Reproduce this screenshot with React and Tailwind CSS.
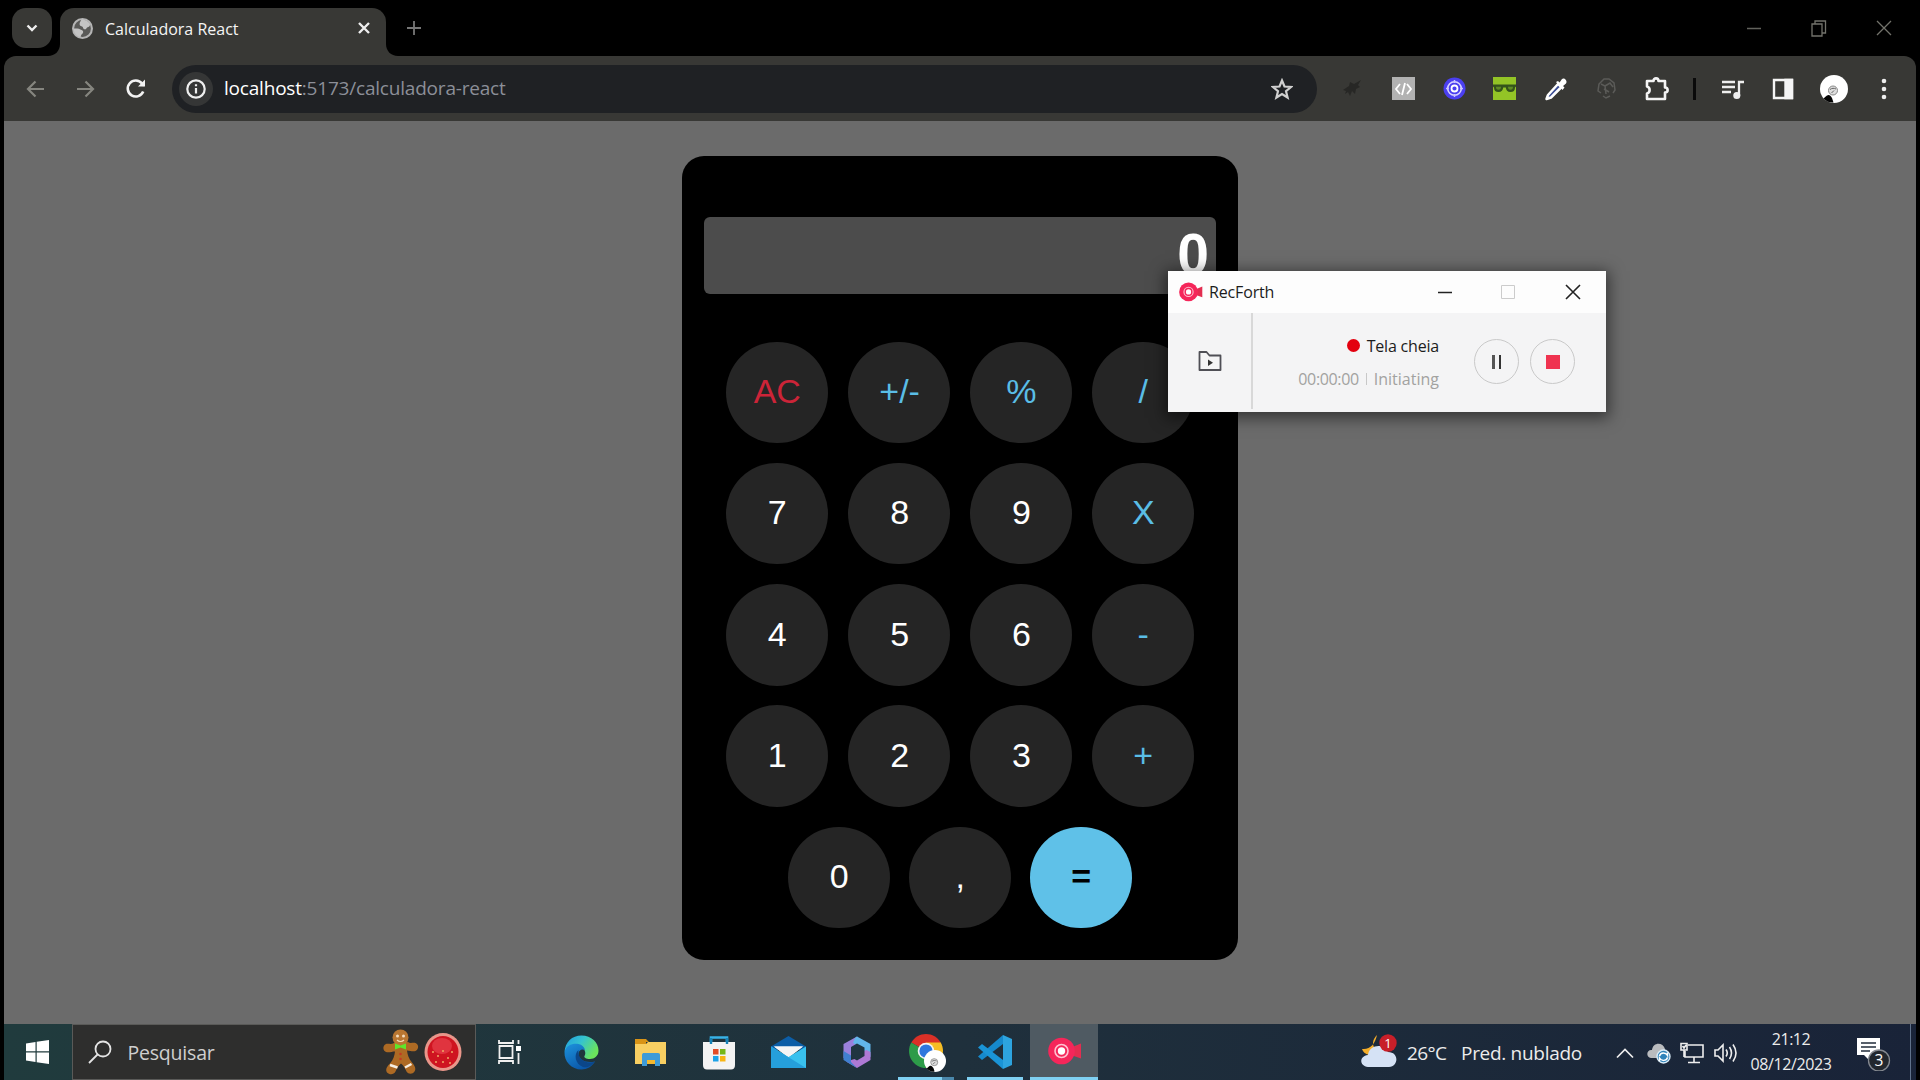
import React from "react";

const RED = "text-[#cc2438]";
const BLUE = "text-[#5abde6]";
const WHITE = "text-white";

const KEYS = [
  ["AC", RED], ["+/-", BLUE], ["%", BLUE], ["/", BLUE],
  ["7", WHITE], ["8", WHITE], ["9", WHITE], ["X", BLUE],
  ["4", WHITE], ["5", WHITE], ["6", WHITE], ["-", BLUE],
  ["1", WHITE], ["2", WHITE], ["3", WHITE], ["+", BLUE],
];

function Key({ children, tone, fill = "bg-[#252525]" }) {
  return (
    <button className={`flex h-[101.5px] w-[101.5px] items-center justify-center rounded-full pb-[2.5px] pl-px font-['Liberation_Sans',sans-serif] text-[34px] leading-none ${fill} ${tone}`}>
      {children}
    </button>
  );
}

function Calculator() {
  return (
    <main className="mt-[35px] ml-[678px] h-[804px] w-[556px] rounded-[22px] bg-black px-[22px] pt-[61px]">
      <div className="flex h-[77px] items-center justify-end rounded-md bg-[#4c4c4c] pr-[7px] font-['Liberation_Sans',sans-serif] text-[57px] leading-none font-bold text-white">
        <span className="pb-[2px]">0</span>
      </div>
      <div className="mt-[47.5px] ml-[22px] grid w-[467.5px] grid-cols-4 justify-between gap-y-[19.8px]">
        {KEYS.map(([label, tone], i) => (
          <div key={label} className={["justify-self-start", "justify-self-start ml-[5.5px]", "justify-self-end mr-[5px]", "justify-self-end"][i % 4]}>
            <Key tone={tone}>{label}</Key>
          </div>
        ))}
      </div>
      <div className="mt-[19.8px] ml-[84px] flex gap-[19.5px]">
        <Key tone={WHITE}>0</Key>
        <Key tone={WHITE}>,</Key>
        <Key tone="text-black font-bold" fill="bg-[#5fc1e8]">=</Key>
      </div>
    </main>
  );
}

function Globe() {
  return (
    <svg width="21" height="21" viewBox="0 0 20 20">
      <circle cx="10" cy="10" r="9" fill="#5a5a58" stroke="#b4b4b4" strokeWidth="2" />
      <path d="M9 1.5c4 0 7 2 8.3 5-.6 2.5-3 2-3.6 3.5-.8 1.5-3.2.8-3.3-.9.1-1.5-2.8-.8-3.1-2.6C7 4.5 8 3.5 9 1.5zM1.500 10c2 .1 5-.2 6.500 1 1.500 1 3 .8 2.600 2.700-.5 1.600-2.100 1.500-2.400 4.600C4 17.500 1.500 14 1.500 10z" fill="#c4c4c4" />
    </svg>
  );
}

function TabStrip() {
  return (
    <div className="flex h-14 items-start bg-black">
      <div className="mt-2 ml-3 flex h-10 w-10 items-center justify-center rounded-[14px] bg-[#383835]">
        <svg width="16" height="16" viewBox="0 0 16 16" fill="none" stroke="#eee" strokeWidth="2.4"><path d="M3.500 5.500 8 10l4.500-4.500" /></svg>
      </div>
      <svg className="mt-11 -ml-[4px]" width="12" height="12" viewBox="0 0 12 12"><path d="M12 0v12H0C7 12 12 7 12 0z" fill="#383835" /></svg>
      <div className="mt-2 flex h-12 w-[326px] items-center rounded-t-[14px] bg-[#383835] pb-2">
        <div className="ml-3"><Globe /></div>
        <span className="ml-[12px] w-[252px] pt-0.5 font-['Open_Sans',sans-serif] text-[16px] whitespace-nowrap text-[#f4f4f4]">Calculadora React</span>
        <svg width="14" height="14" viewBox="0 0 14 14" stroke="#eee" strokeWidth="2.4"><path d="M2 2l10 10M12 2 2 12" /></svg>
      </div>
      <svg className="mt-11" width="12" height="12" viewBox="0 0 12 12"><path d="M0 0v12h12C5 12 0 7 0 0z" fill="#383835" /></svg>
      <svg className="mt-5 ml-2" width="16" height="16" viewBox="0 0 16 16" stroke="#777" strokeWidth="1.8"><path d="M8 1v14M1 8h14" /></svg>
      <div className="mt-[19px] mr-[27px] ml-auto flex gap-[47px]">
        <svg width="18" height="18" viewBox="0 0 18 18" stroke="#62625c" strokeWidth="1.5"><path d="M2 9.500h14" /></svg>
        <svg width="18" height="18" viewBox="0 0 18 18" fill="none" stroke="#73736c" strokeWidth="1.3"><path d="M2 5h10v12H2zM5 5V2h10.500v12H12" /></svg>
        <svg width="18" height="18" viewBox="0 0 18 18" stroke="#73736c" strokeWidth="1.3"><path d="M2 2l14 14M16 2 2 16" /></svg>
      </div>
    </div>
  );
}

function Slot({ children }) {
  return <div className="flex w-[50.7px] shrink-0 items-center justify-center">{children}</div>;
}

function CartoonAvatar({ size }) {
  return (
    <svg width={size} height={size} viewBox="0 0 28 28">
      <circle cx="14" cy="14" r="14" fill="#fff" />
      <circle cx="13" cy="15.500" r="4.500" fill="#ddd" stroke="#888" strokeWidth="1" />
      <path d="M10 14.500c2-1.500 4-1.500 6-.5M14 15.500l-2.500 2.500" stroke="#666" fill="none" />
      <path d="M7 20.500c2-1.500 3.500 0 5 2.500l1.500 4.500C9.500 28 6 26 3.500 23.500c1-1 2.200-1.800 3.500-3z" fill="#050505" />
    </svg>
  );
}

function Extensions() {
  return (
    <div className="ml-[10.5px] flex items-center">
      <Slot>
        <svg width="22" height="22" viewBox="0 0 22 22" fill="#272725"><path d="M1 12l6-4 1-4 4 2 7-4-3 5 2 2-4 2-1 5-3-3-2 5-2-4-3 2 1-3z" /></svg>
      </Slot>
      <Slot>
        <div className="flex h-[23px] w-[23px] items-center justify-center bg-[#b2b2b2]">
          <svg width="19" height="16" viewBox="0 0 19 16" fill="none" stroke="#fff" strokeWidth="1.8"><path d="M6 3 2 8l4 5M13 3l4 5-4 5M11 2 8 14" /></svg>
        </div>
      </Slot>
      <Slot>
        <svg width="23" height="23" viewBox="0 0 23 23"><circle cx="11.500" cy="11.500" r="11" fill="#4b3ff0" /><circle cx="11.500" cy="11.500" r="6.800" fill="none" stroke="#d8d3ff" strokeWidth="1.600" /><circle cx="11.500" cy="11.500" r="3" fill="#4b3ff0" stroke="#fff" strokeWidth="1.800" /><path d="M11.500 3v3M11.500 17v3M3 11.500h3M17 11.500h3" stroke="#c9c4ff" strokeWidth="1.500" /></svg>
      </Slot>
      <Slot>
        <svg width="23" height="23" viewBox="0 0 23 23"><path d="M0 0h23v23H0z" fill="#93c426" /><path d="M0 7.500h23v2l-1 1c0 3-1.500 4.500-4.500 4.500S13 13 12.800 10.500h-2.600C10 13 8.500 15 5.500 15S1 13.500 1 10.500l-1-1z" fill="#34531b" /><path d="M3 9.800h5c0 2-.8 3-2.500 3S3 12 3 9.800zM15 9.800h5c0 2-.8 3-2.500 3s-2.500-1-2.500-3z" fill="#5f8a25" /></svg>
      </Slot>
      <Slot>
        <svg width="24" height="24" viewBox="0 0 24 24"><path d="M14 7 4 18l-1.500 4L7 20.500 17.500 10z" fill="#3b4d94" stroke="#fff" strokeWidth="2.500" strokeLinejoin="round" /><path d="M12 5l2-1 1.500 1.500L18 2c2-2 6 1.500 4 4.500L19 9l1.500 1.500-2 2.500z" fill="#fff" /></svg>
      </Slot>
      <Slot>
        <svg width="21" height="23" viewBox="0 0 21 23" fill="none" stroke="#5b5b58" strokeWidth="1.500"><path d="M5 16l-3-2 1-7 5-5h5l5 4 1 7-2 3M5 7l4 2 1 8M9 9l5-3 3 4M8 12l5 3M7 19l3 2 4-2" /></svg>
      </Slot>
      <Slot>
        <svg width="26" height="26" viewBox="0 0 26 26" fill="none" stroke="#f4f4f4" strokeWidth="2.600" strokeLinejoin="round"><path d="M3 5h6.500c0-3.500 5-3.500 5 0H21v6.500c3.500 0 3.500 5 0 5V23H3v-5.500c3.500-1 3.500-6 0-7z" /></svg>
      </Slot>
      <div className="ml-[11px] h-[22px] w-[3px] bg-[#0a0a0a]" />
      <div className="ml-[11px] flex">
        <Slot>
          <svg width="22" height="22" viewBox="0 0 22 22" fill="none" stroke="#eee" strokeWidth="2.300"><path d="M0 4h13M0 9h13M0 14h9M17 18V4h5" /><circle cx="14.800" cy="17.500" r="2.400" fill="#eee" /></svg>
        </Slot>
        <Slot>
          <svg width="22" height="22" viewBox="0 0 22 22" fill="none" stroke="#f5f5f5" strokeWidth="2.400"><path d="M2 2h18v18H2z" /><path d="M13.500 2H20v18h-6.500z" fill="#f5f5f5" /></svg>
        </Slot>
        <Slot><CartoonAvatar size="28" /></Slot>
        <Slot>
          <svg className="-ml-[2px]" width="6" height="22" viewBox="0 0 6 22" fill="#eee"><circle cx="3" cy="3" r="2.300" /><circle cx="3" cy="11" r="2.300" /><circle cx="3" cy="19" r="2.300" /></svg>
        </Slot>
      </div>
    </div>
  );
}

function Toolbar() {
  return (
    <div className="flex h-[65px] items-center rounded-t-xl bg-[#383835]">
      <svg className="ml-[22px]" width="19" height="18" viewBox="0 0 19 18" fill="none" stroke="#85857f" strokeWidth="2.200"><path d="M18 9H2M9.500 1.500 2 9l7.500 7.500" /></svg>
      <svg className="ml-[31px]" width="19" height="18" viewBox="0 0 19 18" fill="none" stroke="#85857f" strokeWidth="2.200"><path d="M1 9h16M9.500 1.500 17 9l-7.500 7.500" /></svg>
      <svg className="ml-[30px]" width="22" height="22" viewBox="0 0 22 22" fill="none" stroke="#f2f2f2" strokeWidth="2.600"><path d="M18.200 13.500A8 8 0 1 1 17 5.500l2 2" /><path d="M20 1.500V8.500h-7z" fill="#f2f2f2" stroke="none" /></svg>
      <div className="ml-[25px] flex h-12 w-[1145px] items-center rounded-full bg-[#1f2124]">
        <div className="ml-[7px] flex h-[34px] w-[34px] items-center justify-center rounded-full bg-[#353636]">
          <svg width="20" height="20" viewBox="0 0 20 20" fill="none" stroke="#eee" strokeWidth="2.200"><circle cx="10" cy="10" r="8.700" /><path d="M10 9v5.500M10 5.200v2" /></svg>
        </div>
        <div className="ml-[11px] font-['Open_Sans',sans-serif] text-[19px] tracking-[-0.2px] whitespace-nowrap text-[#8c8f98]">
          <span className="text-white">localhost</span>:5173/calculadora-react
        </div>
        <svg className="mr-[24px] ml-auto" width="22" height="22" viewBox="0 0 22 22" fill="none" stroke="#d0d0d0" strokeWidth="2.200"><path d="M11 2.500l2.500 6 6.500.5-5 4.200 1.600 6.300L11 16l-5.600 3.500L7 13.200 2 9l6.500-.5z" /></svg>
      </div>
      <Extensions />
    </div>
  );
}

function RecLogo({ width }) {
  return (
    <svg width={width} viewBox="0 0 34 28">
      <path d="M23 10.500 33 6.500v15L23 18z" fill="#e32d50" />
      <circle cx="13.500" cy="14" r="13.300" fill="#f5265a" />
      <circle cx="13.500" cy="14" r="6.500" fill="none" stroke="#ffc1cf" strokeWidth="1.600" />
      <circle cx="13.500" cy="14" r="3.700" fill="#fff" />
    </svg>
  );
}

function RecorderWindow() {
  return (
    <section className="absolute top-[271px] left-[1168px] h-[141px] w-[437.5px] bg-[#f4f4f5] font-['Open_Sans',sans-serif] text-[16px] text-[#1c1c1c] shadow-[0_3px_14px_3px_rgba(0,0,0,0.5)]">
      <header className="flex h-[42px] items-center bg-[#fdfdfd]">
        <div className="ml-[11px]"><RecLogo width="24" /></div>
        <span className="ml-[6px] w-[66px] tracking-[-0.15px]">RecForth</span>
        <svg className="ml-[162px]" width="16" height="16" viewBox="0 0 16 16" stroke="#222" strokeWidth="1.500"><path d="M1 8.500h14" /></svg>
        <svg className="ml-[47px]" width="16" height="16" viewBox="0 0 16 16" fill="none" stroke="#ccc"><path d="M1.500 1.500h13v13h-13z" /></svg>
        <svg className="ml-[49px]" width="16" height="16" viewBox="0 0 16 16" stroke="#222" strokeWidth="1.600"><path d="m1 1 14 14M15 1 1 15" /></svg>
      </header>
      <div className="flex h-[99px]">
        <div className="mb-[3px] flex w-[85px] items-center justify-center border-r-2 border-[#d8d8d8]">
          <svg width="24" height="22" viewBox="0 0 24 22" fill="none" stroke="#4f4f55" strokeWidth="1.800"><path d="M1.500 2h7l3 3.500h11V20h-21z" strokeLinejoin="round" /><path d="m10 9.500 5 3.300-5 3.200z" fill="#333" stroke="none" /></svg>
        </div>
        <div className="mt-[21px] flex w-[186px] flex-col items-end leading-[24px]">
          <div className="flex items-center"><i className="mr-[7px] mb-px h-[13px] w-[13px] rounded-full bg-[#e3000f]" /><span className="tracking-[-0.2px]">Tela cheia</span></div>
          <div className="mt-[9px] flex items-center text-[#a2a2a0]"><span className="tracking-[-0.35px]">00:00:00</span><i className="mx-[7px] h-3 w-px bg-[#c8c8c8]" /><span>Initiating</span></div>
        </div>
        <div className="mt-[26px] ml-[35px] flex gap-[11px]">
          <div className="flex h-[45px] w-[45px] items-center justify-center gap-[4px] rounded-full border border-[#c9c9c9]"><i className="h-[14px] w-[3px] bg-[#555]" /><i className="h-[14px] w-[2px] bg-[#333]" /></div>
          <div className="flex h-[45px] w-[45px] items-center justify-center rounded-full border border-[#c9c9c9]"><i className="h-[14px] w-[14px] bg-[#ef3350]" /></div>
        </div>
      </div>
    </section>
  );
}

function Gingerbread() {
  return (
    <svg width="36" height="46" viewBox="0 0 36 46">
      <path d="M11 14C8 16 5 14 3 15c-4 2-3 7 0 8 3 .8 6-.5 9-.5-.5 4-1.500 8-5 12-3 3-5 6-3 9 3 3 7 2 8.500-1 1.500-3 2.500-6 5.500-8 3 2 4 5 5.500 8 2 3 6 3 8 0 2-3 0-6-2.500-9-3.500-4-4.500-8-5-12 3 0 6 1.500 8.500.5 3-1.500 4-6 0-8-2.500-1-5 1-7.500-1z" fill="#ad6a24" />
      <circle cx="17.500" cy="8.500" r="8" fill="#b97631" />
      <circle cx="14.500" cy="7" r="1.500" fill="#f3dcc0" /><circle cx="20.500" cy="7" r="1.500" fill="#f3dcc0" />
      <path d="M14 11c2 2 5 2 7 0" stroke="#f4d9b5" fill="none" strokeWidth="1.200" />
      <path d="m12 14.500 5.500 2 5.500-2v6l-5.500-2-5.500 2z" fill="#5ee62b" />
      <circle cx="17.500" cy="25" r="1.300" fill="#c33a22" /><circle cx="17.500" cy="30" r="1.300" fill="#c33a22" />
      <path d="m7 36 7.500 2.500M28.500 35l-6.500 3.500" stroke="#f6eee2" strokeWidth="2.400" />
    </svg>
  );
}

function Fruit() {
  return (
    <svg width="38" height="40" viewBox="0 0 38 40">
      <ellipse cx="19" cy="20" rx="18.500" ry="19" fill="#e9968a" /><ellipse cx="19" cy="20" rx="15.500" ry="16" fill="#cf1420" />
      <ellipse cx="18" cy="14" rx="10" ry="8" fill="#e0343f" />
      <g fill="#f0a765"><circle cx="9" cy="20" r="1" /><circle cx="14" cy="24" r="1" /><circle cx="19" cy="19" r="1" /><circle cx="24" cy="26" r="1" /><circle cx="28" cy="20" r="1" /><circle cx="19" cy="30" r="1" /><circle cx="12" cy="30" r="1" /><circle cx="26" cy="31" r="1" /></g>
    </svg>
  );
}

function Edge() {
  return (
    <svg width="35" height="35" viewBox="0 0 35 35">
      <defs>
        <linearGradient id="edgeTop" x1="0" y1="0" x2="1" y2="0.5"><stop offset="0" stopColor="#1f9be0" /><stop offset="0.5" stopColor="#35c3cf" /><stop offset="1" stopColor="#6be35c" /></linearGradient>
        <linearGradient id="edgeBottom" x1="0" y1="0" x2="0.6" y2="1"><stop offset="0" stopColor="#1d93dd" /><stop offset="1" stopColor="#0a56a8" /></linearGradient>
      </defs>
      <path d="M.5 17C1 7 8 .5 17.500.5c10 0 17 7 17 15 0 5.500-4 8.500-8.500 8.500-4 0-6.500-1.500-5.500-3 2-3 .5-8.500-6-9.500C8 10.500 2 13.500.5 17z" fill="url(#edgeTop)" />
      <path d="M.5 17C2 10 9 8 14.500 9c3.500.7 6 3 6.500 6-3-1.500-6.500 0-6.500 4 0 5.500 7 9.500 16.500 7.500-3 5-8 8-13.500 8C7.500 34.500 0 26.500.5 17z" fill="url(#edgeBottom)" />
      <path d="M14.500 15c-5 4-3.500 14 4.500 17 3.500 1.200 8-.5 12-5.500-9 3.500-18-3-16.500-11.500z" fill="#0b4689" />
    </svg>
  );
}

function Explorer() {
  return (
    <svg width="31" height="28" viewBox="0 0 31 28">
      <path d="M0 1h11l3 3h-3v4H0z" fill="#d99417" /><path d="M0 6h11l2-2h18v22H0z" fill="#f8cf62" />
      <path d="M7 28V17c0-1.500 1-2 2-2h14c1.500 0 2 .7 2 2v11h-5v-6h-8v6z" fill="#3e9bd8" /><path d="M12 22h8v4h-8z" fill="#f5b92e" />
    </svg>
  );
}

function Store() {
  return (
    <svg width="34" height="35" viewBox="0 0 34 35">
      <path d="M9 9V2.500h16V9" fill="none" stroke="#38b2e6" strokeWidth="2.600" /><path d="M1 7h32v23c0 3-1.500 4.500-4 4.500H5c-2.500 0-4-1.500-4-4.500z" fill="#f3f3f3" /><path d="M9 3v6M25 3v6" stroke="#1683b8" strokeWidth="2.400" />
      <path d="M11 14h5.500v5.500H11z" fill="#e34b26" /><path d="M18 14h5.500v5.500H18z" fill="#76b718" /><path d="M11 21h5.500v5.500H11z" fill="#1ca2e8" /><path d="M18 21h5.500v5.500H18z" fill="#f8b513" />
    </svg>
  );
}

function Mail() {
  return (
    <svg width="35" height="32" viewBox="0 0 35 32">
      <path d="M0 10.500 17.500 0 35 10.500V14H0z" fill="#0c5da6" /><path d="M3 10.500h29L17.500 22z" fill="#f5f5f5" /><path d="M0 10.500 17.500 21 35 10.500V32H0z" fill="#39c1ee" /><path d="M0 10.500V32h35z" fill="#259fdb" />
      <path d="M3 10.500h29l-14.500 10z" fill="#f5f5f5" />
    </svg>
  );
}

function Office() {
  return (
    <svg width="30" height="33" viewBox="0 0 30 33">
      <path d="M15 .5 1.500 8v14l7.500 4V12l10-6z" fill="#9a80dc" /><path d="M15 .5 28.500 8v13l-9-5v-5L11 7l2-5z" fill="#62b6ea" /><path d="M28.500 16v8L15 32 4 25.500 19.500 21v-5l5-2z" fill="#ae79d5" /><path d="M1.500 15 9 19.500V26l6 6-13.500-8z" fill="#407fd0" /><path d="m9 11 6-3.500 7.500 4V20L15 24.500 9 21z" fill="#203541" />
    </svg>
  );
}

function Chrome() {
  return (
    <div className="relative ml-[4px] h-[36px] w-[37px]">
      <svg width="34" height="34" viewBox="0 0 34 34">
        <path d="M17 17 2.300 8.500A17 17 0 0 1 31.700 8.500z" fill="#da3027" /><path d="M17 17 31.700 8.500A17 17 0 0 1 17 34z" fill="#f6bd25" /><path d="M17 17v17A17 17 0 0 1 2.300 8.500z" fill="#2d9b49" />
        <path d="M17 8.500h14.700L25 20z" fill="#f6bd25" /><circle cx="17" cy="17" r="8.300" fill="#f4f4f4" /><circle cx="17" cy="17" r="6.600" fill="#2f77de" />
      </svg>
      <div className="absolute right-0 bottom-[-2px]"><CartoonAvatar size="22" /></div>
    </div>
  );
}

function Code() {
  return (
    <svg width="34" height="34" viewBox="0 0 34 34">
      <path d="M25 0 34 4v26l-9 4z" fill="#2da4df" /><path d="M25 0v9L4 25l-4-3.500z" fill="#1689cc" /><path d="M25 34v-9L4 9 0 12.500z" fill="#1a94d6" />
    </svg>
  );
}

const APPS = [
  [Edge, ""], [Explorer, ""], [Store, ""], [Mail, ""], [Office, ""], [Chrome, "chrome"], [Code, "code"],
];

function Taskbar() {
  return (
    <footer className="flex h-14 bg-linear-to-r from-[#203b3d] via-[#1f303c] to-[#192338] font-['Open_Sans',sans-serif] text-[#ececec]">
      <div className="flex w-[67.5px] items-center justify-center">
        <svg width="23" height="24" viewBox="0 0 23 24" fill="#fff"><path d="M0 3.500 9.500 2v9.300H0zM10.700 1.800 23 0v11.300H10.700zM0 12.500h9.500V22L0 20.500zM10.700 12.500H23V24l-12.300-1.800z" /></svg>
      </div>
      <div className="flex w-[404px] items-center border border-[#5a5a58] bg-[#2e2e2d]">
        <svg className="ml-[15px]" width="24" height="24" viewBox="0 0 24 24" fill="none" stroke="#e4e4e4" strokeWidth="1.8"><circle cx="15" cy="9" r="7.500" /><path d="M9.500 14.500 1 23" /></svg>
        <span className="ml-[16px] w-[255px] pt-px text-[19.5px] tracking-[-0.2px] text-[#cfcfcf]">Pesquisar</span>
        <Gingerbread />
        <span className="ml-[5px]"><Fruit /></span>
      </div>
      <div className="flex w-[72px] items-center justify-center pr-1">
        <svg width="24" height="24" viewBox="0 0 24 24" fill="none" stroke="#f0f0f0" strokeWidth="1.8"><path d="M1.500 6h13v12h-13zM1 0v3h14V0M1 24v-3h14v3M20.500 0v4M20.500 13v11" /><path d="M18 6h5v5h-5z" fill="#fff" stroke="none" /></svg>
      </div>
      {APPS.map(([Icon, name], i) => (
        <div key={i} className="flex w-[68.8px] flex-col items-center">
          <div className="flex h-[53px] items-center pt-[3px]"><Icon /></div>
          {name === "code" && <div className="h-[3px] w-[56px] bg-[#7fd0f2]" />}
          {name === "chrome" && <div className="flex h-[3px] w-[56px]"><i className="w-[44px] bg-[#7fd0f2]" /><i className="w-[12px] bg-[#4b88ac]" /></div>}
        </div>
      ))}
      <div className="ml-px flex w-[68px] flex-col items-center bg-[#4f5a62]">
        <div className="flex h-[53px] items-center pt-[1px] pl-[2px]"><RecLogo width="34" /></div>
        <div className="h-[3px] w-full bg-[#7fd0f2]" />
      </div>
      <div className="ml-auto flex items-center pt-0.5">
        <svg className="-mt-1" width="36" height="34" viewBox="0 0 36 34">
          <path d="M16 1C9 8 12 16 20 18l-12 3C4 20 2 18 1 15c8 1 13-5 15-14z" fill="#f5ae2a" />
          <path d="M7 33c-9-1-9-11 0-12 1-11 17-12 20-3 11 0 11 14 1 15z" fill="#d5e2f5" />
          <circle cx="27" cy="9" r="8.700" fill="#c81f29" /><text x="27" y="14" textAnchor="middle" fontSize="13" fontFamily="Open Sans" fill="#fff">1</text>
        </svg>
        <span className="ml-[10px] w-[54px] text-[19px] tracking-[-0.6px]">26°C</span>
        <span className="w-[120px] text-[19px] tracking-[-0.3px] whitespace-nowrap">Pred. nublado</span>
        <svg className="ml-[35px]" width="18" height="12" viewBox="0 0 18 12" fill="none" stroke="#eee" strokeWidth="1.7"><path d="m1 10.500 8-8 8 8" /></svg>
        <svg className="ml-[13px]" width="24" height="22" viewBox="0 0 24 22">
          <path d="M4 16c-6-1-4-9 1-8 1-8 11-8 13-1l2 9z" fill="#b9bbbe" /><circle cx="16.500" cy="14.500" r="6.500" fill="#2f83ba" stroke="#d8ebf7" strokeWidth="1.400" /><path d="M12.500 14c1-4 6-4 8-.5v-3M20.500 15.500c-1 3.500-6 4-8 .5v3" fill="none" stroke="#fff" strokeWidth="1.500" />
        </svg>
        <svg className="ml-[9px]" width="24" height="22" viewBox="0 0 24 22" fill="none" stroke="#eee" strokeWidth="1.600"><path d="M8 3h15v12H5V9M14 15v5M8 20.500h12M1 1.500h6V8H1zM4 8v7M2.500 4l1.500 2 2-3" /></svg>
        <svg className="ml-[10px]" width="24" height="22" viewBox="0 0 24 22" fill="none" stroke="#eee" strokeWidth="1.600"><path d="M1 8h3l5-5v16l-5-5H1zM12 7.500q2.500 3.500 0 7M15.500 5q4 6 0 12M19 2.500q6 8.500 0 17" /></svg>
        <div className="-mt-[3px] ml-[9px] flex w-[88px] flex-col items-center text-[16px] leading-[25px]">
          <span className="tracking-[-0.5px]">21:12</span><span className="tracking-[-0.4px]">08/12/2023</span>
        </div>
        <svg className="ml-[22px]" width="34" height="36" viewBox="0 0 34 36">
          <path d="M0 3h23v17H12v5l-5-5H0z" fill="#fff" /><path d="M4 8h15M4 12h15M4 16h9" stroke="#222c3b" strokeWidth="1.500" />
          <circle cx="22" cy="25.500" r="10.500" fill="#22272e" stroke="#858990" strokeWidth="1.300" /><text x="22" y="31" textAnchor="middle" fontSize="15.5" fontFamily="Open Sans" fill="#fff">3</text>
        </svg>
      </div>
      <div className="mr-[5px] ml-[19px] w-px bg-[#60718a]" />
    </footer>
  );
}

export default function App() {
  return (
    <div className="relative flex h-[1080px] w-[1920px] flex-col overflow-hidden bg-black">
      <TabStrip />
      <div className="mr-[4px] ml-[4px] flex flex-1 flex-col">
        <Toolbar />
        <div className="h-[903px] bg-[#6b6b6b]">
          <div className="flex"><Calculator /></div>
        </div>
        <Taskbar />
      </div>
      <RecorderWindow />
    </div>
  );
}
